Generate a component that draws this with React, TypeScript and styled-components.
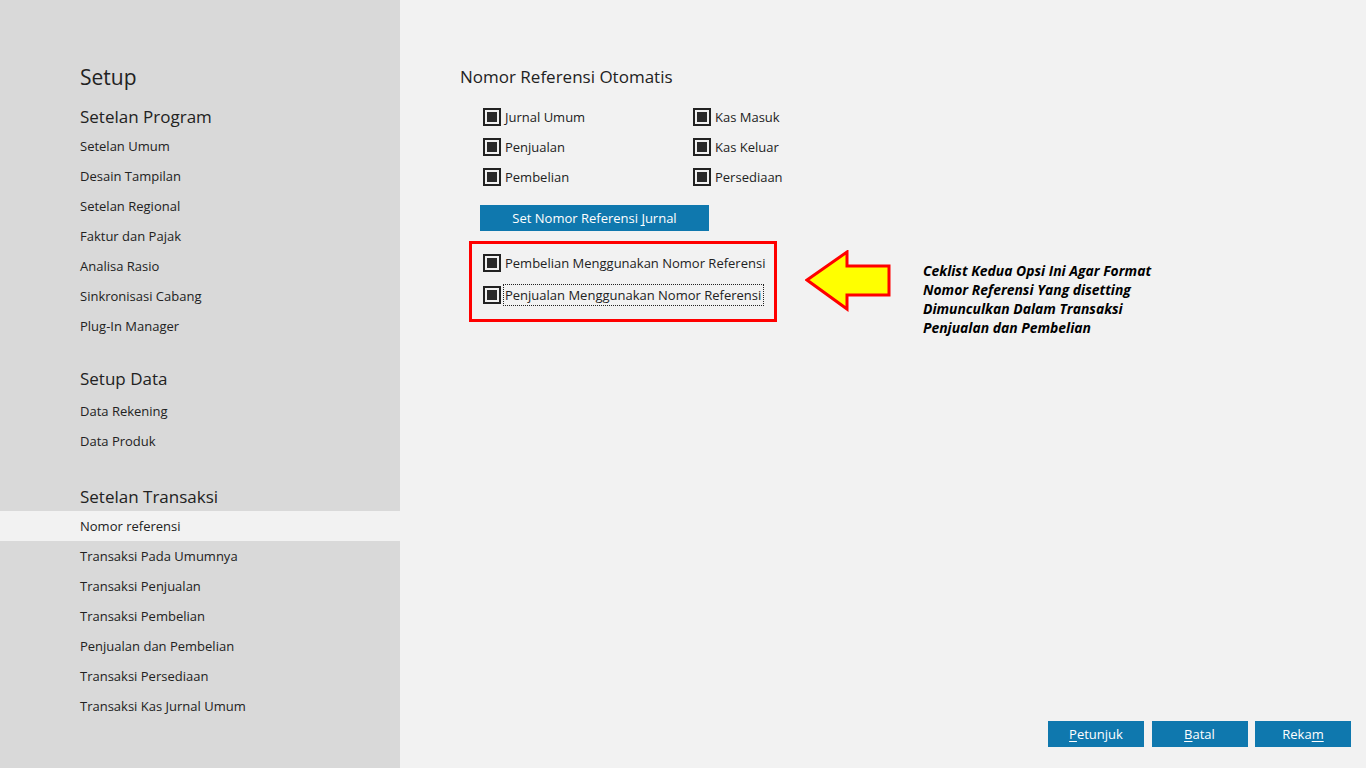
import React from 'react';
import styled, {createGlobalStyle} from 'styled-components';

const GlobalStyle = createGlobalStyle`
	html, body {
		margin: 0;
		padding: 0;
		height: 100%;
		overflow: hidden;
	}
	body {
		font-family: "Open Sans", "Noto Sans", sans-serif;
		color: #222;
		background: #f2f2f2;
	}
`;

const Page = styled.div`
	display: flex;
	width: 100vw;
	height: 100vh;
`;

// Left navigation
const Sidebar = styled.nav`
	width: 400px;
	flex-shrink: 0;
	background: #d9d9d9;
	padding-top: 62px;
	box-sizing: border-box;
	display: flex;
	flex-direction: column;
`;

const SideTitle = styled.div`
	padding-left: 80px;
	font-size: 21px;
	line-height: 30px;
	margin-bottom: 11px;
`;

const Group = styled.div<{ $gap?: number }>`
	display: flex;
	flex-direction: column;
	margin-top: ${p => p.$gap ?? 0}px;
`;

const GroupTitle = styled.div<{ $after?: number }>`
	padding-left: 80px;
	font-size: 17px;
	line-height: 28px;
	height: 28px;
	margin-bottom: ${p => p.$after ?? 0}px;
`;

const NavItem = styled.div<{ $active?: boolean }>`
	padding-left: 80px;
	height: 30px;
	line-height: 30px;
	font-size: 13px;
	background: ${p => (p.$active ? '#f2f2f2' : 'transparent')};
`;

// Main content
const Main = styled.main`
	flex: 1;
	display: flex;
	flex-direction: column;
	padding: 62px 15px 21px 60px;
	box-sizing: border-box;
`;

const Title = styled.div`
	font-size: 17px;
	line-height: 30px;
	margin-bottom: 25px;
`;

const CheckGrid = styled.div`
	display: grid;
	grid-template-columns: 210px 150px;
	grid-auto-rows: 30px;
	margin-top: -15px;
	padding-left: 23px;
`;

const CheckRow = styled.div`
	display: flex;
	align-items: center;
	gap: 4px;
	font-size: 13px;
	height: 30px;
`;

const Label = styled.span<{ $focused?: boolean }>`
	line-height: 18px;
	padding-right: 1px;
	outline: ${p => (p.$focused ? '1px dotted #222' : 'none')};
	outline-offset: 1px;
`;

const Box = styled.span`
	width: 18px;
	height: 18px;
	box-sizing: border-box;
	border: 2px solid #222;
	display: flex;
	align-items: center;
	justify-content: center;
	flex-shrink: 0;
	&::after {
		content: '';
		width: 10px;
		height: 10px;
		background: #2a2a2a;
	}
`;

const BlueButton = styled.button<{ $width: number }>`
	width: ${p => p.$width}px;
	height: 26px;
	border: none;
	background: #0f78ae;
	color: #fff;
	font-family: "Open Sans", "Noto Sans", sans-serif;
	font-size: 13px;
	padding: 0;
	cursor: pointer;
	u {
		text-underline-offset: 2px;
	}
`;

const JurnalButton = styled(BlueButton)`
	margin-top: 13px;
	margin-left: 20px;
`;

const Highlight = styled.div`
	display: flex;
	align-items: flex-start;
	margin-top: 10px;
	margin-left: 9px;
`;

const RedFrame = styled.div`
	width: 308px;
	height: 81px;
	box-sizing: border-box;
	border: 3px solid #ff0000;
	padding: 4px 0 0 11px;
	display: flex;
	flex-direction: column;
	gap: 2px;
`;

const Arrow = styled.svg`
	margin-left: 28px;
	margin-top: 9px;
	flex-shrink: 0;
`;

const Note = styled.div`
	margin-left: 31px;
	margin-top: 20px;
	font-size: 13.9px;
	line-height: 19px;
	font-weight: 700;
	font-style: italic;
	color: #000;
	white-space: nowrap;
`;

const Footer = styled.div`
	margin-top: auto;
	display: flex;
	justify-content: flex-end;
	gap: 7.5px;
`;

const programItems = ['Setelan Umum', 'Desain Tampilan', 'Setelan Regional', 'Faktur dan Pajak', 'Analisa Rasio', 'Sinkronisasi Cabang', 'Plug-In Manager'];
const dataItems = ['Data Rekening', 'Data Produk'];
const transaksiItems = ['Nomor referensi', 'Transaksi Pada Umumnya', 'Transaksi Penjualan', 'Transaksi Pembelian', 'Penjualan dan Pembelian', 'Transaksi Persediaan', 'Transaksi Kas Jurnal Umum'];

const checks = ['Jurnal Umum', 'Kas Masuk', 'Penjualan', 'Kas Keluar', 'Pembelian', 'Persediaan'];

const Check = ({label, focused}: { label: string; focused?: boolean }) => (
	<CheckRow>
		<Box/>
		<Label $focused={focused}>{label}</Label>
	</CheckRow>
);

export default function App() {
	return (
		<Page>
			<GlobalStyle/>
			<Sidebar>
				<SideTitle>Setup</SideTitle>
				<Group>
					<GroupTitle>Setelan Program</GroupTitle>
					{programItems.map(item => <NavItem key={item}>{item}</NavItem>)}
				</Group>
				<Group $gap={24}>
					<GroupTitle $after={3}>Setup Data</GroupTitle>
					{dataItems.map(item => <NavItem key={item}>{item}</NavItem>)}
				</Group>
				<Group $gap={27}>
					<GroupTitle>Setelan Transaksi</GroupTitle>
					{transaksiItems.map((item, i) => <NavItem key={item} $active={i === 0}>{item}</NavItem>)}
				</Group>
			</Sidebar>
			<Main>
				<Title>Nomor Referensi Otomatis</Title>
				<CheckGrid>
					{checks.map(c => <Check key={c} label={c}/>)}
				</CheckGrid>
				<JurnalButton $width={229}>Set Nomor Referensi <u>J</u>urnal</JurnalButton>
				<Highlight>
					<RedFrame>
						<Check label="Pembelian Menggunakan Nomor Referensi"/>
						<Check label="Penjualan Menggunakan Nomor Referensi" focused/>
					</RedFrame>
					<Arrow width="87" height="62" viewBox="0 0 87 62">
						<polygon points="2,30 42,2 42,16 84,16 84,45 42,45 42,59" fill="#ffff00" stroke="#ff0000" strokeWidth="3" strokeLinejoin="miter"/>
					</Arrow>
					<Note>
						Ceklist Kedua Opsi Ini Agar Format<br/>
						Nomor Referensi Yang disetting<br/>
						Dimunculkan Dalam Transaksi<br/>
						Penjualan dan Pembelian
					</Note>
				</Highlight>
				<Footer>
					<BlueButton $width={96}><u>P</u>etunjuk</BlueButton>
					<BlueButton $width={96}><u>B</u>atal</BlueButton>
					<BlueButton $width={96}>Reka<u>m</u></BlueButton>
				</Footer>
			</Main>
		</Page>
	);
}
